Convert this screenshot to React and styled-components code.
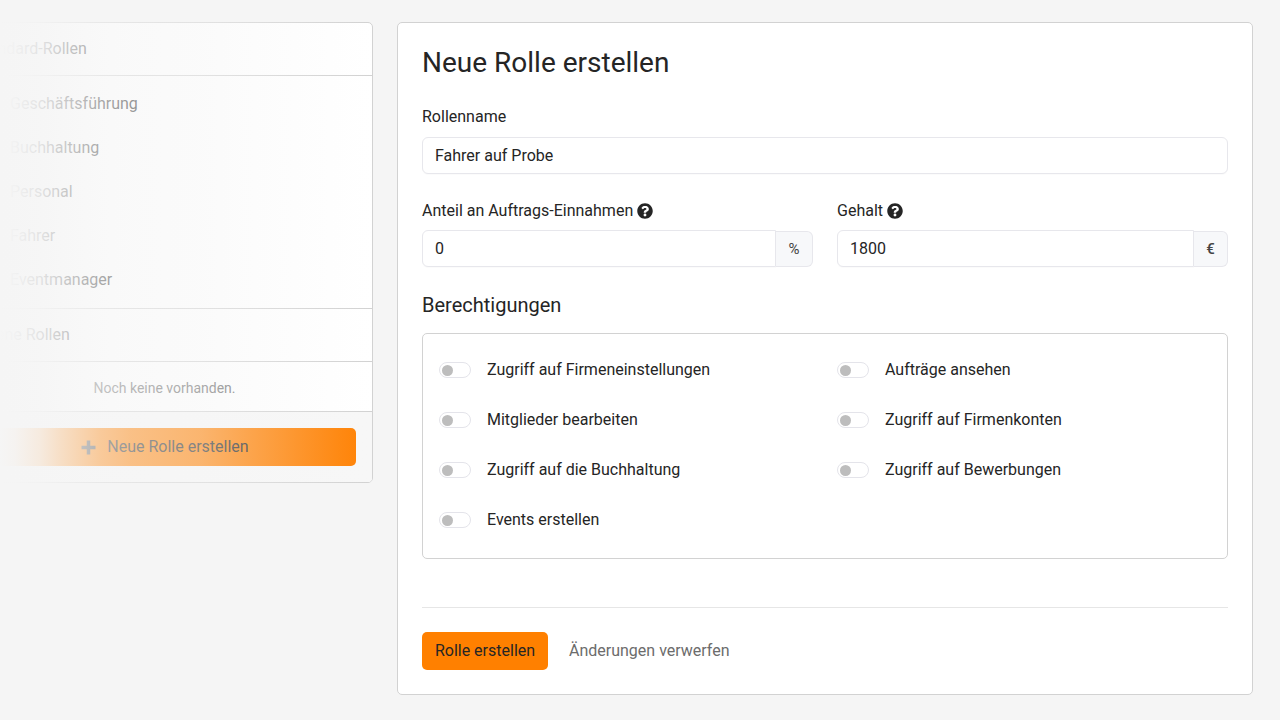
import React from "react";
import styled, { createGlobalStyle } from "styled-components";

const Global = createGlobalStyle`
  html, body { margin: 0; padding: 0; background: #f5f5f5; overflow: hidden; }
  body { font-family: Roboto, "Liberation Sans", sans-serif; font-size: 16px; line-height: 24px; color: #252525; }
  * { box-sizing: border-box; }
`;

const Page = styled.div`
  width: 1280px;
  height: 720px;
  overflow: hidden;
  display: flex;
  align-items: flex-start;
  gap: 24px;
  padding-top: 22px;
  position: relative;
`;

const SideCard = styled.aside`
  flex: 0 0 413px;
  margin-left: -40px;
  background: #fff;
  border: 1px solid #d2d2d2;
  border-radius: 5px;
  overflow: hidden;
`;

const SideHead = styled.div`
  height: 53px;
  padding: 14px 18px 0 13px;
  border-bottom: 1px solid #d2d2d2;
  white-space: nowrap;
`;

const RoleList = styled.ul`
  list-style: none;
  margin: 0;
  padding: 6px 0;
  border-bottom: 1px solid #d2d2d2;
`;

const RoleItem = styled.li`
  height: 44px;
  padding: 10px 49px;
`;

const EmptyNote = styled.div`
  height: 50px;
  padding-top: 14px;
  text-align: center;
  font-size: 14px;
  line-height: 24px;
  color: #6c6c6c;
  border-bottom: 1px solid #d2d2d2;
  padding-right: 4px;
`;

const SideFoot = styled.div`
  background: #f7f7f7;
  padding: 16px;
`;

const NewRole = styled.button`
  width: 100%;
  height: 38px;
  border: 0;
  border-radius: 5px;
  background: #ff8000;
  color: #252525;
  font: inherit;
  display: flex;
  align-items: center;
  justify-content: center;
  gap: 11px;
  padding: 0 3px 0 0;
`;

const Fade = styled.div`
  position: absolute;
  left: 0;
  top: 0;
  width: 373px;
  height: 720px;
  pointer-events: none;
  background: linear-gradient(90deg, rgba(245,245,245,1) 0%, rgba(245,245,245,.98) 4%, rgba(245,245,245,.91) 10.700%, rgba(245,245,245,.81) 16%, rgba(245,245,245,.63) 27%, rgba(245,245,245,.55) 35%, rgba(245,245,245,.45) 54%, rgba(245,245,245,.3) 68%, rgba(245,245,245,.08) 91%, rgba(245,245,245,0) 100%);
`;

const Main = styled.main`
  flex: 0 0 856px;
  height: 673px;
  background: #fff;
  border: 1px solid #d2d2d2;
  border-radius: 5px;
  padding: 25px 24px 24px;
`;

const Title = styled.h1`
  margin: 0 0 27px;
  font-size: 28px;
  font-weight: 400;
  line-height: 30px;
  color: #252525;
`;

const Label = styled.label`
  display: flex;
  align-items: center;
  gap: 4px;
  height: 24px;
  margin-bottom: 8px;
`;

const TextInput = styled.input`
  display: block;
  width: 100%;
  min-width: 0;
  height: 37px;
  padding: 0 12px;
  border: 1px solid #e7e7ec;
  border-radius: 6px;
  background: #fff;
  color: #252525;
  font: inherit;
  outline: none;
  box-shadow: 0 1px 1px rgba(0,0,0,.02);
`;

const Columns = styled.div`
  display: grid;
  grid-template-columns: 1fr 1fr;
  gap: 24px;
  margin-top: 25px;
`;

const InputGroup = styled.div`
  display: flex;
  align-items: center;
  margin-top: -1px;
`;

const GroupInput = styled(TextInput)`
  flex: 1;
  border-radius: 6px 0 0 6px;
`;

const Addon = styled.span`
  flex: 0 0 ${(p) => p.$w}px;
  height: 36px;
  display: flex;
  align-items: center;
  justify-content: center;
  background: #f7f8fa;
  border: 1px solid #e7e7ec;
  border-left: 0;
  border-radius: 0 6px 6px 0;
  font-size: 15px;
  font-weight: ${(p) => p.$weight || 400};
  color: #444;
`;

const Section = styled.h2`
  margin: 23px 0 13px;
  font-size: 20px;
  line-height: 30px;
  font-weight: 400;
  color: #252525;
`;

const PermBox = styled.div`
  height: 226px;
  border: 1px solid #d2d2d2;
  border-radius: 5px;
  padding: 11px 16px;
  display: grid;
  grid-template-columns: 398px 1fr;
  grid-auto-rows: 50px;
`;

const Perm = styled.div`
  display: flex;
  align-items: center;
  gap: 16px;
`;

const Toggle = styled.span`
  width: 32px;
  height: 16px;
  border: 1px solid #e4e4ea;
  border-radius: 8px;
  background: #fff;
  display: flex;
  align-items: center;
  padding-left: 2px;
  &::before {
    content: "";
    width: 11px;
    height: 11px;
    border-radius: 50%;
    background: #bdbdbd;
  }
`;

const Footer = styled.div`
  margin-top: 48px;
  border-top: 1px solid #e6e6e6;
  padding-top: 24px;
  display: flex;
  align-items: center;
  gap: 21px;
`;

const Primary = styled.button`
  height: 38px;
  width: 126px;
  border: 0;
  border-radius: 5px;
  background: #ff8000;
  color: #252525;
  font: inherit;
  padding: 0;
`;

const Discard = styled.span`
  color: #6c6c6c;
`;

const Help = () => (
  <svg width="16" height="16" viewBox="0 0 512 512" fill="#252525" aria-hidden="true">
    <path d="M504 256c0 137-111 248-248 248S8 393 8 256 119 8 256 8s248 111 248 248zM262.700 90c-54.500 0-89.300 23-116.500 63.800-3.500 5.300-2.400 12.400 2.700 16.300l34.700 26.300c5.200 3.900 12.600 3 16.700-2.100 17.900-22.700 30.100-35.800 57.300-35.800 20.400 0 45.700 13.100 45.700 32.900 0 15-12.400 22.700-32.600 34-23.600 13.200-54.800 29.700-54.800 70.900V300c0 6.600 5.400 12 12 12h56c6.600 0 12-5.400 12-12v-1.300c0-28.600 83.500-29.800 83.500-107.100 0-58.200-60.400-102.300-116.900-102.300zM256 339c-25.500 0-46.200 20.700-46.200 46.200 0 25.500 20.700 46.200 46.200 46.200s46.200-20.700 46.200-46.200c0-25.500-20.700-46.200-46.200-46.200z" />
  </svg>
);

const Plus = () => (
  <svg width="15" height="15" viewBox="0 0 15 15" aria-hidden="true">
    <path d="M7.500 0.500v14M0.500 7.500h14" stroke="#404040" strokeWidth="3.500" fill="none" />
  </svg>
);

const roles = ["Geschäftsführung", "Buchhaltung", "Personal", "Fahrer", "Eventmanager"];
const perms = [
  "Zugriff auf Firmeneinstellungen",
  "Aufträge ansehen",
  "Mitglieder bearbeiten",
  "Zugriff auf Firmenkonten",
  "Zugriff auf die Buchhaltung",
  "Zugriff auf Bewerbungen",
  "Events erstellen",
];

export default function App() {
  return (
    <Page>
      <Global />
      <SideCard>
        <SideHead>Standard-Rollen</SideHead>
        <RoleList>
          {roles.map((r) => (
            <RoleItem key={r}>{r}</RoleItem>
          ))}
        </RoleList>
        <SideHead>Eigene Rollen</SideHead>
        <EmptyNote>Noch keine vorhanden.</EmptyNote>
        <SideFoot>
          <NewRole>
            <Plus />
            Neue Rolle erstellen
          </NewRole>
        </SideFoot>
      </SideCard>
      <Fade />
      <Main>
        <Title>Neue Rolle erstellen</Title>
        <Label>Rollenname</Label>
        <TextInput defaultValue="Fahrer auf Probe" />
        <Columns>
          <div>
            <Label>
              Anteil an Auftrags-Einnahmen <Help />
            </Label>
            <InputGroup>
              <GroupInput defaultValue="0" />
              <Addon $w={37}>%</Addon>
            </InputGroup>
          </div>
          <div>
            <Label>
              Gehalt <Help />
            </Label>
            <InputGroup>
              <GroupInput defaultValue="1800" />
              <Addon $w={34} $weight={500}>€</Addon>
            </InputGroup>
          </div>
        </Columns>
        <Section>Berechtigungen</Section>
        <PermBox>
          {perms.map((p) => (
            <Perm key={p}>
              <Toggle />
              {p}
            </Perm>
          ))}
        </PermBox>
        <Footer>
          <Primary>Rolle erstellen</Primary>
          <Discard>Änderungen verwerfen</Discard>
        </Footer>
      </Main>
    </Page>
  );
}
